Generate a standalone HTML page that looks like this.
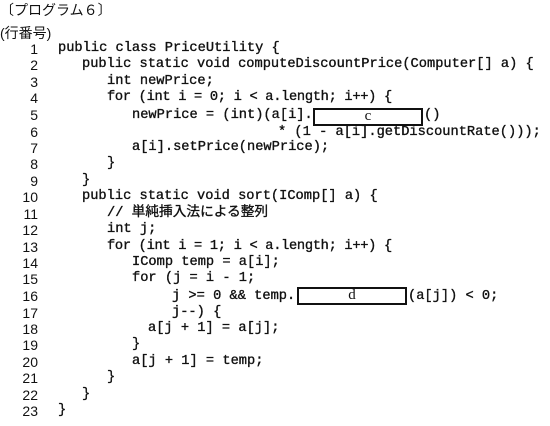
<!DOCTYPE html>
<html><head><meta charset="utf-8"><style>
body{margin:0;width:550px;height:426px;background:#fff;position:relative;overflow:hidden;color:#111}
.j{position:absolute;font-family:"Liberation Sans","Noto Sans CJK JP",sans-serif;font-size:14px;line-height:16px}
.n{position:absolute;left:0;width:38px;text-align:right;font-family:"Liberation Sans",sans-serif;font-size:14px;line-height:16px}
.c{position:absolute;font-family:"Liberation Mono","Noto Sans CJK JP",monospace;font-size:13.7px;line-height:16px;white-space:pre;-webkit-text-stroke:0.35px #111}
.b{position:absolute;border:2px solid #111;box-sizing:border-box;font-family:"Liberation Serif",serif;font-size:15px;text-align:center;line-height:13px}
</style></head><body>
<div class="j" style="left:0;top:2px">〔プログラム６〕</div>
<div class="j" style="left:0;top:25px">(行番号)</div>

<div class="n" style="top:41px">1</div><div class="c" style="left:58px;top:41px">public class PriceUtility {</div>
<div class="n" style="top:57px">2</div><div class="c" style="left:82px;top:57px">public static void computeDiscountPrice(Computer[] a) {</div>
<div class="n" style="top:74px">3</div><div class="c" style="left:107px;top:74px">int newPrice;</div>
<div class="n" style="top:90px">4</div><div class="c" style="left:107px;top:90px;letter-spacing:-0.3px">for (int i = 0; i &lt; a.length; i++) {</div>
<div class="n" style="top:107px">5</div><div class="c" style="left:132px;top:108px">newPrice = (int)(a[i].</div>
<div class="b" style="left:313px;top:108px;width:110px;height:18px">c</div>
<div class="c" style="left:424px;top:108px">()</div>
<div class="n" style="top:124px">6</div><div class="c" style="left:278px;top:125px">* (1 - a[i].getDiscountRate()));</div>
<div class="n" style="top:140px">7</div><div class="c" style="left:132px;top:140px">a[i].setPrice(newPrice);</div>
<div class="n" style="top:156px">8</div><div class="c" style="left:107px;top:156px">}</div>
<div class="n" style="top:173px">9</div><div class="c" style="left:82px;top:173px">}</div>
<div class="n" style="top:189px">10</div><div class="c" style="left:82px;top:189px">public static void sort(IComp[] a) {</div>
<div class="n" style="top:206px">11</div><div class="c" style="left:107px;top:206px">// 単純挿入法による整列</div>
<div class="n" style="top:222px">12</div><div class="c" style="left:107px;top:222px">int j;</div>
<div class="n" style="top:239px">13</div><div class="c" style="left:107px;top:239px;letter-spacing:-0.3px">for (int i = 1; i &lt; a.length; i++) {</div>
<div class="n" style="top:255px">14</div><div class="c" style="left:132px;top:255px">IComp temp = a[i];</div>
<div class="n" style="top:271px">15</div><div class="c" style="left:132px;top:271px">for (j = i - 1;</div>
<div class="n" style="top:288px">16</div><div class="c" style="left:172px;top:289px">j &gt;= 0 &amp;&amp; temp.</div>
<div class="b" style="left:297px;top:287px;width:110px;height:18px">d</div>
<div class="c" style="left:408px;top:289px">(a[j]) &lt; 0;</div>
<div class="n" style="top:305px">17</div><div class="c" style="left:172px;top:305px">j--) {</div>
<div class="n" style="top:321px">18</div><div class="c" style="left:148px;top:321px">a[j + 1] = a[j];</div>
<div class="n" style="top:337px">19</div><div class="c" style="left:132px;top:337px">}</div>
<div class="n" style="top:354px">20</div><div class="c" style="left:132px;top:354px">a[j + 1] = temp;</div>
<div class="n" style="top:370px">21</div><div class="c" style="left:107px;top:370px">}</div>
<div class="n" style="top:387px">22</div><div class="c" style="left:82px;top:387px">}</div>
<div class="n" style="top:403px">23</div><div class="c" style="left:58px;top:403px">}</div>
</body></html>
